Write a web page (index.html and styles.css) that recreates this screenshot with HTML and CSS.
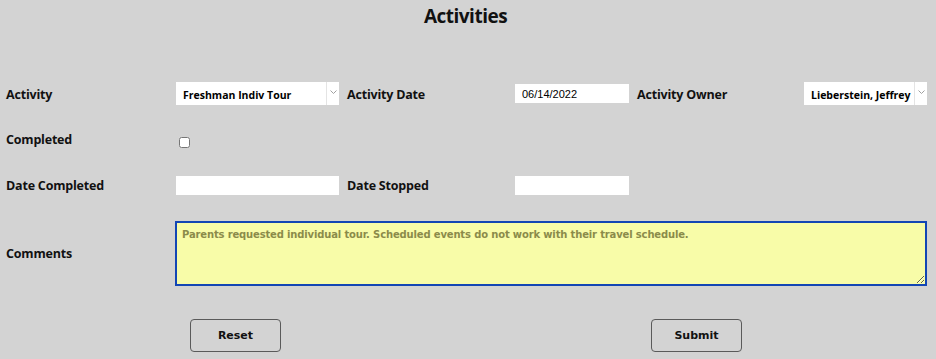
FILE: index.html
```html
<!DOCTYPE html>
<html lang="en">
<head>
    <meta charset="UTF-8">
    <title>Activities</title>
    <link rel="stylesheet" href="styles.css">
</head>
<body>
    <h1 class="title">Activities</h1>

    <form class="activity-form">
        <label class="lbl row1">Activity</label>
        <div class="ctl row1">
            <div class="select select-wide">
                <select><option>Freshman Indiv Tour</option></select>
                <span class="arrow"><svg width="7" height="4" viewBox="0 0 7 4"><path d="M0.5 0.5 L3.5 3.5 L6.5 0.5" fill="none" stroke="#a0a0a0" stroke-width="1"/></svg></span>
            </div>
        </div>
        <label class="lbl row1">Activity Date</label>
        <div class="ctl row1"><input class="txt txt-short" type="text" value="06/14/2022"></div>
        <label class="lbl row1">Activity Owner</label>
        <div class="ctl row1">
            <div class="select select-owner">
                <select><option>Lieberstein, Jeffrey</option></select>
                <span class="arrow"><svg width="7" height="4" viewBox="0 0 7 4"><path d="M0.5 0.5 L3.5 3.5 L6.5 0.5" fill="none" stroke="#a0a0a0" stroke-width="1"/></svg></span>
            </div>
        </div>

        <label class="lbl row2">Completed</label>
        <div class="ctl row2 full"><input type="checkbox" class="chk"></div>

        <label class="lbl row3">Date Completed</label>
        <div class="ctl row3"><input class="txt txt-wide" type="text"></div>
        <label class="lbl row3">Date Stopped</label>
        <div class="ctl row3 rest"><input class="txt txt-short" type="text"></div>

        <label class="lbl row4">Comments</label>
        <div class="ctl row4 full">
            <textarea class="comments">Parents requested individual tour. Scheduled events do not work with their travel schedule.</textarea>
        </div>
    </form>

    <div class="actions">
        <button type="button" class="btn">Reset</button>
        <button type="button" class="btn">Submit</button>
    </div>
</body>
</html>
```

FILE: styles.css
```css
body {
    margin: 0;
    padding: 0;
    background: #d3d3d3;
    font-family: "Open Sans", Arial, sans-serif;
    color: #111;
}
.title {
    margin: 0;
    padding: 4px 5px 0 0;
    height: 24px;
    line-height: 24px;
    text-align: center;
    font-size: 19px;
    font-weight: bold;
    letter-spacing: -0.5px;
}
.activity-form {
    display: grid;
    grid-template-columns: 170px 171px 168px 122px 167px 123px;
    grid-template-rows: 47px 47px 45px 65px;
    margin-top: 54px;
    padding-left: 6px;
}
.lbl {
    display: flex;
    align-items: flex-start;
    font-size: 12.5px;
    font-weight: bold;
    line-height: 14px;
    letter-spacing: -0.2px;
}
.ctl {
    display: flex;
    align-items: flex-start;
}
.full {
    grid-column: 2 / span 5;
}
.rest {
    grid-column: 4 / span 3;
}
.row1.lbl { padding-top: 6px; }
.row2.lbl { padding-top: 4px; }
.row2 .chk { margin: 8px 0 0 3px; width: 11px; height: 11px; }
.row3.lbl { padding-top: 3px; }
.row4.lbl { padding-top: 26px; }
.select {
    display: flex;
    background: #fff;
    height: 23px;
}
.select select {
    flex: 1;
    min-width: 0;
    appearance: none;
    border: none;
    background: transparent;
    font-family: "Open Sans", Arial, sans-serif;
    font-size: 10.5px;
    font-weight: bold;
    padding: 2px 0 0 7px;
    color: #000;
    outline: none;
}
.select .arrow {
    width: 12px;
    border-left: 1px solid #e4e4e4;
    display: flex;
    align-items: flex-start;
    justify-content: center;
    padding-top: 8px;
}
.select-wide { width: 163px; }
.select-owner { width: 123px; }
.txt {
    border: none;
    background: #fff;
    height: 19px;
    box-sizing: border-box;
    padding: 0 7px;
    font-family: "Liberation Sans", Arial, sans-serif;
    font-size: 11px;
    color: #000;
}
.row1 .txt { margin-top: 2px; }
.txt-wide { width: 163px; }
.txt-short { width: 114px; }
.comments {
    width: 755px;
    height: 65px;
    box-sizing: border-box;
    margin: 0 0 0 -1px;
    border: 2px solid #1346b4;
    background: #f8fca8;
    color: #8b8b4a;
    font-family: "DejaVu Sans", Verdana, sans-serif;
    font-size: 10px;
    font-weight: bold;
    letter-spacing: -0.15px;
    padding: 6px 5px;
    resize: both;
    outline: none;
}
.actions {
    display: flex;
    padding: 33px 0 0 190px;
    gap: 370px;
}
.btn {
    width: 91px;
    height: 33px;
    background: #d3d3d3;
    border: 1px solid #5a5a5a;
    border-radius: 4px;
    font-family: "DejaVu Sans", Arial, sans-serif;
    font-size: 11px;
    font-weight: bold;
    color: #111;
    cursor: pointer;
}
```
